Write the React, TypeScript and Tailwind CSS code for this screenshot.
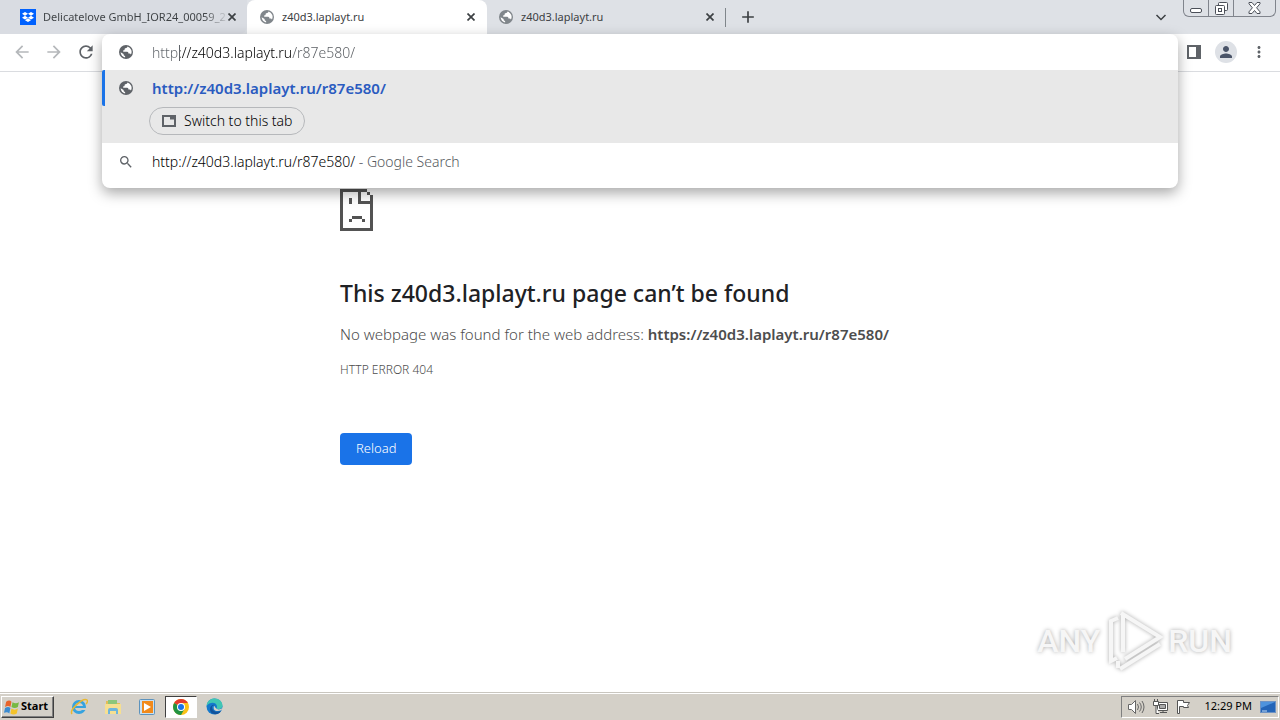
import type { ReactNode } from "react"
import {
  MdAdd,
  MdArrowBack,
  MdArrowForward,
  MdMoreVert,
  MdPerson,
  MdRefresh,
  MdSearch,
} from "react-icons/md"
import { SiDropbox } from "react-icons/si"

interface TabProps {
  title: string
  icon: ReactNode
  active?: boolean
  className?: string
}

function GlobeIcon({ className = "" }: { className?: string }) {
  return (
    <svg width="16" height="16" viewBox="0 0 16 16" className={`shrink-0 ${className}`}>
      <circle cx="8" cy="8" r="7" fill="currentColor" />
      <path
        d="M9.500 2.600c-.2 1.200-1 1.600-2.200 1.700-.6.1-.7.600-.7 1.300 0 .6-.6.900-1.400.9v1.300h4c1 0 1.200.8 1.200 1.800h1.200c.6 0 1.100.4 1.300 1A5.500 5.500 0 0 0 9.500 2.600zM2.600 8.300c.2 2.600 2 4.700 4.500 5.100v-1.500c-.9 0-1.500-.6-1.500-1.400v-.6z"
        fill="white"
      />
    </svg>
  )
}

function Tab({ title, icon, active, className = "" }: TabProps) {
  return (
    <div
      className={`flex h-[34px] min-w-0 items-center text-[11px] text-[#3c4043] ${
        active ? "rounded-t-lg bg-white" : ""
      } ${className}`}
    >
      <button className="flex min-w-0 flex-1 items-center gap-[7px] text-left">
        {icon}
        <span className="whitespace-nowrap">{title}</span>
      </button>
      <button aria-label="Close tab" className="shrink-0 p-[3px]">
        <svg width="8" height="8" viewBox="0 0 8 8" stroke="currentColor" strokeWidth="1.700">
          <path d="m.5.5 7 7M7.500.5l-7 7" />
        </svg>
      </button>
    </div>
  )
}

function TabStrip() {
  return (
    <div className="flex h-[34px] bg-[#dee1e6]">
      <div className="flex min-w-0 flex-1">
        <Tab
          title="Delicatelove GmbH_IOR24_00059_2"
          className="w-[247px] rounded-br-lg bg-[#d9dce2] pr-2 pl-5 [&_span:last-child]:bg-[linear-gradient(to_right,#3c4043_88%,#c4c7cc)] [&_span:last-child]:bg-clip-text [&_span:last-child]:text-transparent"
          icon={
            <i className="flex h-4 w-4 shrink-0 items-center justify-center bg-[#0061fe]">
              <SiDropbox className="h-3 w-3 text-white" />
            </i>
          }
        />
        <Tab
          active
          title="z40d3.laplayt.ru"
          className="w-[240px] pr-[9px] pl-3"
          icon={<GlobeIcon className="text-[#80868b]" />}
        />
        <Tab
          title="z40d3.laplayt.ru"
          className="w-[238px] pr-2 pl-[11px]"
          icon={<GlobeIcon className="text-[#80868b]" />}
        />
        <div className="mt-2 h-[19px] w-px bg-[#80868b]" />
        <button aria-label="New tab" className="ml-3 text-[#3c4043]">
          <MdAdd className="h-5 w-5" />
        </button>
      </div>
      <button aria-label="Search tabs" className="mr-[14px] text-[#3c4043]">
        <svg width="16" height="16" viewBox="0 0 16 16" fill="none" stroke="currentColor" strokeWidth="1.500">
          <path d="m3.500 6 4.500 4.500L12.500 6" />
        </svg>
      </button>
      <WindowControls />
    </div>
  )
}

function WindowControls() {
  return (
    <div className="mr-1 flex h-[17px] rounded-b-md border border-t-0 border-[#80848c] text-[#4b4f58]">
      <button aria-label="Minimize" className="flex w-6 items-end justify-center pb-[3px]">
        <svg width="12" height="5" viewBox="0 0 12 5" fill="white" stroke="currentColor">
          <rect x="0.5" y="0.5" width="11" height="4" rx="1.5" />
        </svg>
      </button>
      <button
        aria-label="Restore"
        className="flex w-[26px] items-center justify-center border-x border-[#80848c]"
      >
        <svg width="13" height="13" viewBox="0 0 13 13" fill="white" stroke="currentColor">
          <rect x="3.5" y="0.5" width="9" height="8" rx="1" />
          <rect x="0.5" y="3.5" width="9" height="9" rx="1" />
          <rect x="3.5" y="6.5" width="3" height="3" />
        </svg>
      </button>
      <button aria-label="Close" className="flex w-[41px] items-center justify-center">
        <svg width="13" height="12" viewBox="0 0 13 12" fill="white" stroke="currentColor">
          <path d="M1 .5h3l2.500 3 2.500-3h3v1.300L8.600 5.800l3.400 4v1.700H9l-2.500-3-2.500 3H1V9.800l3.400-4L1 1.800z" />
        </svg>
      </button>
    </div>
  )
}

function Omnibox() {
  return (
    <div className="absolute inset-x-0 top-0 z-10 overflow-hidden rounded-lg bg-white text-sm font-light shadow-[0_5px_14px_rgba(0,0,0,0.35)]">
      <div className="flex h-9 items-center gap-[18px] pl-4">
        <GlobeIcon className="text-[#5f6368]" />
        <div className="relative flex-1 pt-px">
          <input
            aria-label="Address and search bar"
            defaultValue="http://z40d3.laplayt.ru/r87e580/"
            className="block w-full bg-[linear-gradient(to_right,#60656a_28px,#000_28px,#000_139px,#55595e_139px)] bg-clip-text text-transparent outline-none"
          />
          <span className="absolute top-[3px] left-[27px] h-4 w-px bg-[#5f6368]" />
        </div>
      </div>

      <div className="h-[73px] bg-[#e8e8e8]">
        <div className="flex h-9 items-center gap-[18px] rounded-l-xs border-l-3 border-[#1a73e8] pl-[13px]">
          <GlobeIcon className="text-[#5f6368]" />
          <a href="#" className="pt-px text-[15px] font-semibold text-[#2a5bc0]">
            http://z40d3.laplayt.ru/r87e580/
          </a>
        </div>
        <button className="mt-px ml-[47px] flex h-7 items-center gap-[7px] rounded-full border border-[#b6b8bb] px-[11px] text-black">
          <svg width="16" height="16" viewBox="0 0 16 16" fill="none" stroke="#5f6368" strokeWidth="2">
            <rect x="2" y="3" width="12" height="10" />
            <path d="M9 5h4" strokeWidth="3" />
          </svg>
          Switch to this tab
        </button>
      </div>

      <div className="flex h-[45px] items-center gap-[18px] pb-2 pl-4">
        <MdSearch className="h-4 w-4 shrink-0 text-[#5f6368]" />
        <p className="text-black">
          http://z40d3.laplayt.ru/r87e580/<span className="text-[#55595e]"> - Google Search</span>
        </p>
      </div>
    </div>
  )
}

function Toolbar() {
  return (
    <div className="flex h-[38px] border-b border-[#dadce0] bg-white">
      <div className="flex h-9 w-[102px] items-center gap-3 pl-3 text-[#5f6368]">
        <button aria-label="Back" className="text-[#b5b8bb]">
          <MdArrowBack className="h-5 w-5" />
        </button>
        <button aria-label="Forward" className="text-[#b5b8bb]">
          <MdArrowForward className="h-5 w-5" />
        </button>
        <button aria-label="Reload page">
          <MdRefresh className="h-5 w-5" />
        </button>
      </div>
      <div className="relative flex-1">
        <Omnibox />
      </div>
      <div className="flex h-9 w-[102px] items-center pl-2 text-[#5f6368]">
        <button aria-label="Side panel">
          <svg width="16" height="16" viewBox="0 0 16 16" fill="currentColor">
            <path d="M1 1h14v14H1zM3 3v10h7V3z" fillRule="evenodd" />
          </svg>
        </button>
        <button
          aria-label="Profile"
          className="ml-[13px] flex h-[22px] w-[22px] items-center justify-center rounded-full bg-[#dee1e6] text-[#4a5468]"
        >
          <MdPerson className="h-[18px] w-[18px]" />
        </button>
        <button aria-label="Menu" className="ml-[13px]">
          <MdMoreVert className="h-[18px] w-[18px]" />
        </button>
      </div>
    </div>
  )
}

function ErrorPage() {
  return (
    <main className="mx-auto w-full max-w-[600px] pt-[117px] text-[#4d4d4d]">
      <svg width="33" height="42" viewBox="0 0 33 42" fill="#535353" shapeRendering="crispEdges">
        <path d="M0 0h27v3H3v36h27V15H18V3h3v9h9V6h3v36H0z" />
        <path d="M27 3h3v3h-3zM9 9h3v6H9zM12 27h10v3H12zM9 30h3v3H9zM22 30h3v3h-3z" />
      </svg>
      <h1 className="mt-[46px] text-[23px] leading-8 font-medium text-[#202124]">
        This z40d3.laplayt.ru page can’t be found
      </h1>
      <p className="mt-[14px] text-[15px] font-light whitespace-nowrap">
        No webpage was found for the web address:{" "}
        <strong className="font-semibold">https://z40d3.laplayt.ru/r87e580/</strong>
      </p>
      <p className="mt-4 text-xs font-light">HTTP ERROR 404</p>
      <button className="mt-[55px] h-8 rounded bg-[#1a73e8] px-4 text-[13px] font-light text-white">
        Reload
      </button>
    </main>
  )
}

function Watermark() {
  return (
    <div className="absolute right-12 bottom-[19px] flex items-center gap-1 font-['Roboto'] text-[32px] leading-none font-medium text-[#f6f6f6] [text-shadow:0_0_4px_#aaaaaa]">
      <span>ANY</span>
      <svg
        width="60"
        height="64"
        viewBox="0 0 60 64"
        fill="none"
        stroke="#f6f6f6"
        strokeWidth="4"
        className="drop-shadow-[0_0_2px_#aaaaaa]"
      >
        <path d="M19 5v38M17 4 56 28 21 50" />
        <path d="M14 9 7 12v40l6-3" />
        <path d="M14 59v-7M16 60l40-25" />
      </svg>
      <span>RUN</span>
    </div>
  )
}

function ChromeIcon() {
  return (
    <svg width="16" height="16" viewBox="0 0 16 16">
      <circle cx="8" cy="8" r="8" fill="#fbc116" />
      <path d="M8 8 1.100 4A8 8 0 0 1 14.900 4H8z" fill="#e33b2e" />
      <path d="M1.100 4A8 8 0 0 0 8 16l3.500-6L8 8z" fill="#229342" />
      <circle cx="8" cy="8" r="4" fill="white" />
      <circle cx="8" cy="8" r="3" fill="#1a73e8" />
    </svg>
  )
}

function ExplorerIcon() {
  return (
    <svg width="18" height="18" viewBox="0 0 18 18" fill="none">
      <circle cx="9" cy="9" r="5.500" stroke="#36a3df" strokeWidth="3" />
      <path d="M4 9h11" stroke="#36a3df" strokeWidth="2" />
      <path d="M12 11h5" stroke="#d4d0c8" strokeWidth="2" />
      <path d="M2 16C-1 12 13-1 17 2c1 1 0 3-1 4" stroke="#e9b82f" strokeWidth="1.500" />
    </svg>
  )
}

function FolderIcon() {
  return (
    <svg width="18" height="18" viewBox="0 0 18 18">
      <path d="M2 3h6l1 2h7v11H2z" fill="#e3bd57" />
      <path d="M4 2h9v4H4z" fill="#8cc67a" />
      <path d="M1 6h16v10H1z" fill="#f6df91" />
      <path d="M4 16v-4q0-2 2-2h6q2 0 2 2v4h-2v-3H6v3z" fill="#6eb5dc" />
    </svg>
  )
}

function MediaIcon() {
  return (
    <svg width="16" height="16" viewBox="0 0 16 16">
      <rect x="0.500" y="0.500" width="15" height="15" rx="1" fill="#c9e0f1" stroke="#5d93bd" />
      <rect x="3" y="2" width="11" height="12" fill="#f18a1b" />
      <path d="m5 4 7 4-7 4z" fill="white" />
    </svg>
  )
}

function EdgeIcon() {
  return (
    <svg width="17" height="17" viewBox="0 0 17 17">
      <circle cx="8.500" cy="8.500" r="8" fill="#1479cc" />
      <path d="M.6 8C1 3 4.500.5 8.500.5c5 0 8 3.500 8 7 0 3-3 4-5 3.500-1.500-.5-.5-1-.5-2.500C11 4 4 3 .6 8z" fill="#40c6b4" />
      <path d="M6 9c0 4 4 6 9 4-3 5-11 4-11-2 0-3 3-5 5-4-2 0-3 1-3 2z" fill="#12529b" />
      <path d="M8 8c1 0 1 2 3 3s4 0 5.500-1c0 2-2 3-5 3S7 11 8 8z" fill="#d4d0c8" />
    </svg>
  )
}

function Taskbar() {
  return (
    <footer className="flex h-[28px] items-center border-t border-[#c9c6bf] bg-[#d4d0c8] px-px text-[11px] text-black shadow-[inset_0_1px_white]">
      <button className="flex h-[22px] w-[53px] items-center gap-px border border-t-white border-r-[#404040] border-b-[#404040] border-l-white pl-[2px] font-bold shadow-[inset_-1px_-1px_#808080]">
        <svg width="16" height="16" viewBox="0 0 15 14">
          <path d="M2 2q3-2 5 0L6 7Q4 5 1 7z" fill="#e8642b" />
          <path d="M8 2.500q3 2 6 0l-1 4.500q-3 2-6 0z" fill="#77b943" />
          <path d="M1 8q3-2 5 0l-1 5q-2-2-5-.5z" fill="#3c8bd0" />
          <path d="M7 8.500q3 2 6 0l-1 4.500q-3 2-6 0z" fill="#f4c32a" />
        </svg>
        Start
      </button>
      <div className="ml-4 flex items-center">
        <button aria-label="Internet Explorer"><ExplorerIcon /></button>
        <button aria-label="File Explorer" className="ml-4"><FolderIcon /></button>
        <button aria-label="Media Player" className="ml-[17px]"><MediaIcon /></button>
        <button
          aria-label="Google Chrome"
          className="ml-[10px] flex h-[22px] w-8 items-center justify-center border border-t-[#404040] border-r-white border-b-white border-l-[#404040] bg-white"
        >
          <ChromeIcon />
        </button>
        <button aria-label="Microsoft Edge" className="ml-[9px]"><EdgeIcon /></button>
      </div>
      <div className="ml-auto flex h-[22px] items-center border border-t-[#808080] border-r-white border-b-white border-l-[#808080] pr-[2px] pl-[5px]">
        <svg width="18" height="16" viewBox="0 0 18 16" fill="white" stroke="#666666">
          <path d="M1.500 5.500h3l4-4v13l-4-4h-3z" />
          <path d="M10.500 5q2 3 0 6M12.500 3.500q3.500 4.500 0 9M15 2q4 6 0 12" fill="none" />
        </svg>
        <svg width="17" height="16" viewBox="0 0 17 16" className="ml-[7px]" fill="white" stroke="#555555">
          <path d="M5.500 3.500h10v8h-10zM8 13.500h7M11 11.500v2" />
          <path d="M7.500 5.500h6v4h-6z" fill="#aaaaaa" />
          <path d="M1.500 2.500h5v4h-5zM2.500 0v2M5.500 0v2M4 6.500v8h3" />
        </svg>
        <svg width="17" height="16" viewBox="0 0 17 16" className="ml-[6px]" fill="white" stroke="#555555">
          <path d="M2.500 1.500h6v2h6l-2 3 1 2H8.500v-1h-4v7h-2z" />
        </svg>
        <time className="ml-3 whitespace-nowrap">12:29 PM</time>
        <svg width="16" height="14" viewBox="0 0 16 14" className="ml-2">
          <rect x="0.500" y="1.500" width="15" height="11" fill="#2465b8" stroke="#6e93c4" />
          <path d="M1 2h14L1 8z" fill="#4e93dd" />
          <path d="M2 11h5" stroke="#c6ddf4" />
        </svg>
      </div>
    </footer>
  )
}

export default function App() {
  return (
    <div className="flex min-h-screen flex-col bg-white font-['Noto_Sans',sans-serif]">
      <TabStrip />
      <Toolbar />
      <div className="relative flex-1">
        <ErrorPage />
        <Watermark />
      </div>
      <Taskbar />
    </div>
  )
}
